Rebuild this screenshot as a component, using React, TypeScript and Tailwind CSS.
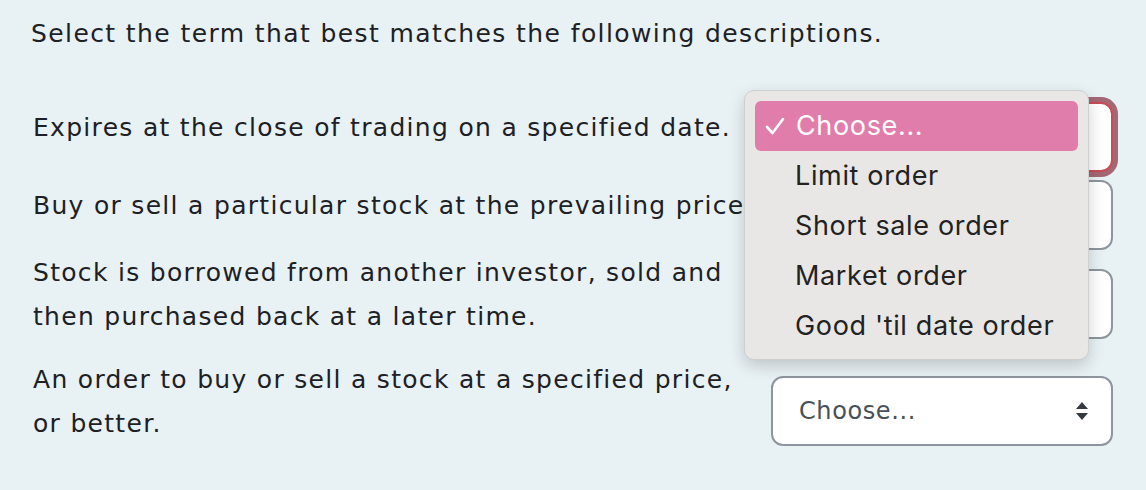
import React from 'react'

const body = { fontFamily: '"DejaVu Sans", "Open Sans", sans-serif' }
const menuFont = { fontFamily: 'Inter, "Noto Sans", sans-serif' }

function Arrows() {
  return (
    <svg width="14" height="20" viewBox="0 0 14 20" className="shrink-0">
      <path d="M7 1 L13 8 H1 Z" fill="#343a40" />
      <path d="M7 19 L13 12 H1 Z" fill="#343a40" />
    </svg>
  )
}

function Select({ focused = false, children }: { focused?: boolean; children?: React.ReactNode }) {
  return (
    <div
      className={
        'relative w-[342px] h-[70px] shrink-0 rounded-[12px] bg-white flex items-center justify-between pl-[26px] pr-[22px] ' +
        (focused
          ? 'border-2 border-[#c94b57] shadow-[0_0_0_5px_rgba(140,58,74,0.75)]'
          : 'border-2 border-[#8f959e]')
      }
    >
      <span className="text-[24px] tracking-[0.6px] text-[#495057]">Choose...</span>
      <Arrows />
      {children}
    </div>
  )
}

function Check() {
  return (
    <svg width="20" height="20" viewBox="0 0 20 20" className="ml-[10px] mr-[11px]">
      <path d="M2 11 L7.5 17 L18 3" fill="none" stroke="white" strokeWidth="2.6" strokeLinecap="round" strokeLinejoin="round" />
    </svg>
  )
}

function Menu() {
  const items = ['Limit order', 'Short sale order', 'Market order', "Good 'til date order"]
  return (
    <div
      style={menuFont}
      className="absolute left-[-29px] top-[-14px] z-10 w-[345px] h-[270px] rounded-[10px] bg-[#e8e7e5] border border-[#cfcfcf] shadow-[0_6px_16px_rgba(0,0,0,0.18)] p-[10px] text-[27px] tracking-[0.65px]"
    >
      <div className="h-[50px] rounded-[6px] bg-[#e17dab] flex items-center text-white">
        <Check />
        <span>Choose...</span>
      </div>
      {items.map((it) => (
        <div key={it} className="h-[50px] flex items-center text-[#222222] pl-[40px]">
          {it}
        </div>
      ))}
    </div>
  )
}

export default function App() {
  return (
    <div style={body} className="w-[1146px] h-[490px] bg-[#e8f1f4] text-[#1d2125] overflow-hidden">
      <div className="pl-[31px] pt-[12px] text-[25px] tracking-[1.4px] leading-[44px]">
        Select the term that best matches the following descriptions.
      </div>

      <div className="pl-[33px] mt-[46px] text-[25px] tracking-[1.3px] leading-[44px]">
        <div className="flex items-center h-[70px]">
          <div className="w-[738px] shrink-0 pb-[18px] whitespace-nowrap">Expires at the close of trading on a specified date.</div>
          <Select focused>
            <Menu />
          </Select>
        </div>

        <div className="flex items-center h-[70px] mt-[8px]">
          <div className="w-[738px] shrink-0 pb-[18px] whitespace-nowrap">
            Buy or sell a particular stock at the prevailing price
          </div>
          <Select />
        </div>

        <div className="flex items-center mt-[1px]">
          <div className="w-[738px] shrink-0 pb-[18px] whitespace-nowrap">
            Stock is borrowed from another investor, sold and
            <br />
            then purchased back at a later time.
          </div>
          <Select />
        </div>

        <div className="flex items-center mt-[1px]">
          <div className="w-[738px] shrink-0 pb-[18px] whitespace-nowrap">
            An order to buy or sell a stock at a specified price,
            <br />
            or better.
          </div>
          <Select />
        </div>
      </div>
    </div>
  )
}
